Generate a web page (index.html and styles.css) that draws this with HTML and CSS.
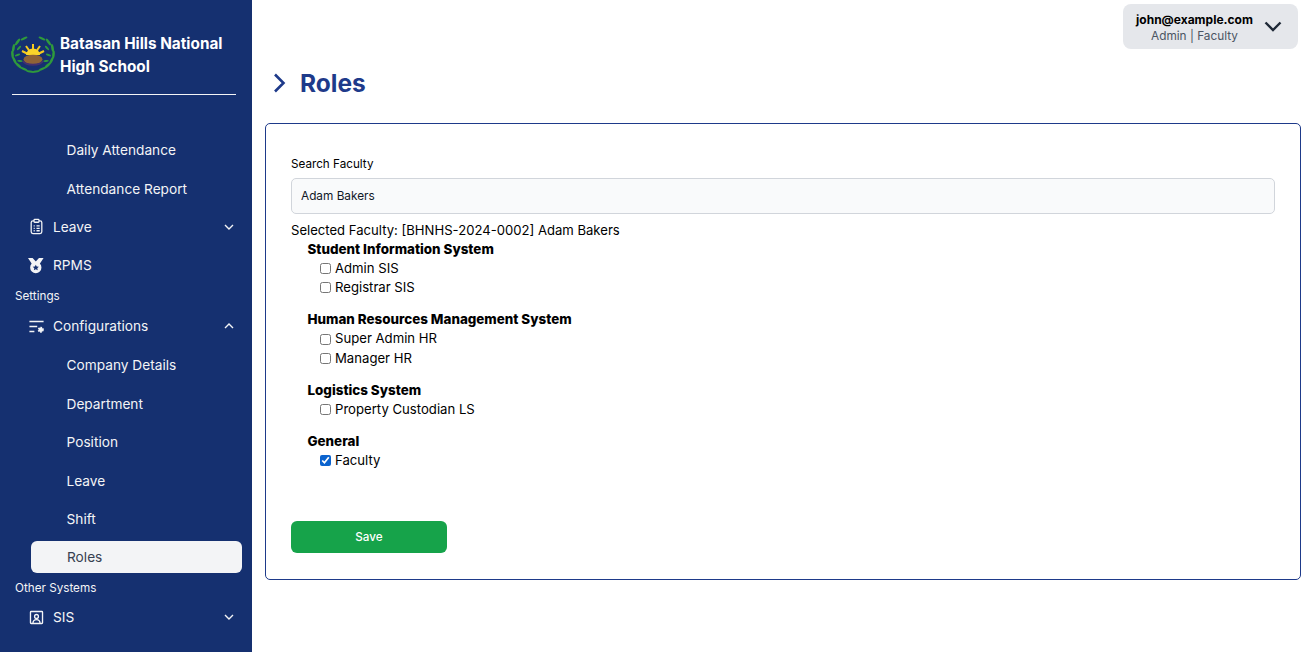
FILE: index.html
```html
<!DOCTYPE html>
<html lang="en">
<head>
<meta charset="utf-8">
<title>Roles</title>
<link rel="stylesheet" href="styles.css">
</head>
<body>
<div class="app">
<aside class="sidebar">
  <div class="brand">
    <svg class="logo" viewBox="0 0 46 38" aria-hidden="true">
      <defs>
        <g id="laurel" fill="#2f9a3c">
          <ellipse cx="14" cy="2.500" rx="3.800" ry="1.200" transform="rotate(-25 14 2.500)"/>
          <ellipse cx="7.500" cy="6" rx="4" ry="1.300" transform="rotate(-55 7.500 6)"/>
          <ellipse cx="3.500" cy="12" rx="4" ry="1.300" transform="rotate(-80 3.500 12)"/>
          <ellipse cx="2.500" cy="18.500" rx="4" ry="1.300" transform="rotate(85 2.500 18.500)"/>
          <ellipse cx="4.500" cy="24.500" rx="4" ry="1.300" transform="rotate(65 4.500 24.500)"/>
          <ellipse cx="8.500" cy="29.500" rx="4" ry="1.300" transform="rotate(42 8.500 29.500)"/>
          <ellipse cx="14" cy="33" rx="4" ry="1.200" transform="rotate(25 14 33)"/>
          <ellipse cx="20" cy="35.500" rx="4" ry="1.100" transform="rotate(10 20 35.500)"/>
          <ellipse cx="9" cy="12" rx="2.800" ry="1" transform="rotate(-45 9 12)"/>
          <ellipse cx="7.500" cy="19" rx="2.800" ry="1" transform="rotate(-20 7.500 19)"/>
          <ellipse cx="10" cy="25" rx="2.800" ry="1" transform="rotate(5 10 25)"/>
        </g>
      </defs>
      <use href="#laurel"/>
      <use href="#laurel" transform="translate(46 0) scale(-1 1)"/>
      <path d="M23 8v6M16 10l3.500 5M30 10l-3.500 5M12 15l5 2.500M34 15l-5 2.500" stroke="#f7cb1e" stroke-width="2" fill="none"/>
      <path d="M16 19a7 6.500 0 0 1 14 0z" fill="#fbd52a"/>
      <ellipse cx="23" cy="23.500" rx="9.500" ry="4.800" fill="#8f6336"/>
      <path d="M13 25c3 5 17 5 20 0" fill="none" stroke="#43306f" stroke-width="1.800"/>
    </svg>
    <div class="brand-name">Batasan Hills National High School</div>
  </div>
  <div class="brand-rule"></div>
  <nav class="nav">
    <a class="item sub">Daily Attendance</a>
    <a class="item sub">Attendance Report</a>
    <a class="item top">
      <svg class="ico" viewBox="0 0 24 24" fill="none" stroke="currentColor" stroke-width="1.800"><rect x="4.500" y="4" width="15" height="18" rx="2.500"/><rect x="8.500" y="2" width="7" height="4" rx="1" fill="#153070"/><path d="M8 11h1.500M12 11h4.500M8 14.500h1.500M12 14.500h4.500M8 18h1.500M12 18h4.500"/></svg>
      <span>Leave</span>
      <svg class="chev" viewBox="0 0 12 12" fill="none" stroke="currentColor" stroke-width="1.400"><path d="M2 4l4 4 4-4"/></svg>
    </a>
    <a class="item top rpms">
      <svg class="ico" viewBox="0 0 24 24" fill="currentColor"><path d="M0 1.500h6.500l4.500 5 4.500-5H22l-6 9-5-2.500-5 2.500z"/><path fill-rule="evenodd" d="M11 6.800a8 8 0 1 1 0 16 8 8 0 0 1 0-16zm0 4l1.300 2.700 3 .3-2.200 2 .6 3-2.700-1.500-2.700 1.500.6-3-2.200-2 3-.3z"/></svg>
      <span>RPMS</span>
    </a>
    <div class="section first">Settings</div>
    <a class="item top conf">
      <svg class="ico" viewBox="0 0 24 24" fill="none" stroke="currentColor" stroke-width="2"><path d="M2 5h20M2 12h11M2 19h7"/><circle cx="18" cy="16.500" r="3.200" fill="currentColor" stroke-dasharray="2 1.300" stroke-width="2.200"/></svg>
      <span>Configurations</span>
      <svg class="chev" viewBox="0 0 12 12" fill="none" stroke="currentColor" stroke-width="1.400"><path d="M2 8l4-4 4 4"/></svg>
    </a>
    <a class="item sub">Company Details</a>
    <a class="item sub">Department</a>
    <a class="item sub">Position</a>
    <a class="item sub">Leave</a>
    <a class="item sub">Shift</a>
    <a class="item sub active">Roles</a>
    <div class="section second">Other Systems</div>
    <a class="item top">
      <svg class="ico" viewBox="0 0 24 24" fill="none" stroke="currentColor" stroke-width="1.900"><rect x="3.500" y="3.500" width="17" height="17" rx="1"/><circle cx="12" cy="10.500" r="2.700"/><path d="M7 20.500c0-4 2-5.500 5-5.500s5 1.500 5 5.500"/></svg>
      <span>SIS</span>
      <svg class="chev" viewBox="0 0 12 12" fill="none" stroke="currentColor" stroke-width="1.400"><path d="M2 4l4 4 4-4"/></svg>
    </a>
  </nav>
</aside>
<main class="main">
  <header class="topbar">
    <div class="user">
      <div class="user-text">
        <div class="user-mail">john@example.com</div>
        <div class="user-role">Admin | Faculty</div>
      </div>
      <svg class="user-chev" viewBox="0 0 18 11" fill="none" stroke="#1f2937" stroke-width="2.400"><path d="M1.500 1.500L9 9l7.500-7.500"/></svg>
    </div>
  </header>
  <div class="title-row">
    <svg class="title-chev" viewBox="0 0 13 20" fill="none" stroke="#1e3a8a" stroke-width="2.600"><path d="M2 1.500l8.500 8.500L2 18.500"/></svg>
    <h1>Roles</h1>
  </div>
  <section class="card">
    <label class="field-label" for="q">Search Faculty</label>
    <input id="q" class="field" type="text" value="Adam Bakers">
    <div class="selected">Selected Faculty: [BHNHS-2024-0002] Adam Bakers</div>
    <div class="groups">
      <div class="group">
        <div class="group-name">Student Information System</div>
        <label class="check"><input type="checkbox">Admin SIS</label>
        <label class="check"><input type="checkbox">Registrar SIS</label>
      </div>
      <div class="group">
        <div class="group-name">Human Resources Management System</div>
        <label class="check"><input type="checkbox">Super Admin HR</label>
        <label class="check"><input type="checkbox">Manager HR</label>
      </div>
      <div class="group">
        <div class="group-name">Logistics System</div>
        <label class="check"><input type="checkbox">Property Custodian LS</label>
      </div>
      <div class="group">
        <div class="group-name">General</div>
        <label class="check"><input type="checkbox" checked>Faculty</label>
      </div>
    </div>
    <button class="save" type="button">Save</button>
  </section>
</main>
</div>
</body>
</html>
```
FILE: styles.css
```css
* { box-sizing: border-box; }
html, body { margin: 0; height: 100%; }
body { font-family: "Inter", "Liberation Sans", sans-serif; background: #fff; color: #000; overflow: hidden; }
.app { display: flex; height: 652px; }
.sidebar { width: 252px; flex: none; background: #153070; color: #f3f4f6; padding: 29px 10px 0 0; }
.brand { display: flex; align-items: center; gap: 4px; padding-left: 10px; height: 48px; }
.logo { width: 46px; height: 38px; flex: none; margin-top: 4px; }
.brand-name { font-size: 15.300px; font-weight: 700; line-height: 23px; color: #fff; width: 180px; margin-top: 4px; }
.brand-rule { height: 1px; background: #f3f4f6; margin: 17px 6px 0 12px; }
.nav { display: flex; flex-direction: column; padding-top: 36px; }
.item { display: flex; align-items: center; height: 38.400px; font-size: 13.700px; flex: none; }
.sub { padding-left: 66.500px; }
.top { padding-left: 28px; }
.top span { margin-left: 8px; flex: 1; }
.ico { width: 17px; height: 17px; flex: none; }
.chev { width: 12px; height: 12px; flex: none; margin-right: 7px; }
.rpms { height: 38px; }
.conf { height: 39px; padding-bottom: 1px; }
.active { background: #f3f4f6; color: #374151; height: 32px; margin: 3px 0 0 31px; padding-left: 36px; border-radius: 6px; }
.section { font-size: 11.700px; padding-left: 15px; height: 16px; line-height: 16px; flex: none; }
.first { margin-top: 4px; margin-bottom: 3px; }
.second { margin-top: 7px; margin-bottom: 2px; }
.main { flex: 1; min-width: 0; padding: 0 12px 0 13px; }
.topbar { display: flex; justify-content: flex-end; padding: 4px 3px 0 0; }
.user { display: flex; align-items: center; width: 175px; height: 45px; background: #e5e7eb; border-radius: 8px; padding: 2px 0 0 11px; }
.user-text { width: 121px; text-align: center; }
.user-mail { font-size: 12px; font-weight: 700; line-height: 16px; white-space: nowrap; }
.user-role { font-size: 11.800px; line-height: 16px; color: #4b5563; }
.user-chev { width: 18px; height: 11px; margin: -2px 0 0 9px; }
.title-row { display: flex; align-items: center; margin-top: 17px; padding-left: 8px; height: 34px; }
.title-chev { width: 13px; height: 20px; flex: none; }
h1 { margin: 0 0 0 14px; font-size: 24.500px; font-weight: 700; color: #1e3a8a; line-height: 34px; }
.card { margin-top: 23px; height: 457px; border: 1px solid #1e3a8a; border-radius: 5px; padding: 32px 25px 0; }
.field-label { display: block; font-size: 11.700px; line-height: 16px; }
.field { display: block; width: 100%; height: 36px; margin-top: 6px; padding: 0 9px; font: 11.800px "Inter", "Liberation Sans", sans-serif; color: #111827; background: #f9fafb; border: 1px solid #d1d5db; border-radius: 5px; }
.selected { font-size: 13.100px; line-height: 20px; margin-top: 6px; height: 20px; white-space: nowrap; }
.groups { padding-left: 16.500px; }
.group { margin-bottom: 12.800px; }
.group-name { font-size: 13.400px; font-weight: 800; line-height: 19px; }
.check { display: flex; align-items: center; font-size: 13.150px; line-height: 19.300px; padding-left: 12.500px; }
.check input { width: 11px; height: 11px; margin: 0 4px 0 0; accent-color: #0b63ce; }
.save { display: block; width: 156px; height: 32px; margin-top: 51px; border: 0; border-radius: 6px; background: #16a34a; color: #fff; font: 500 11.700px "Inter", "Liberation Sans", sans-serif; }
```
